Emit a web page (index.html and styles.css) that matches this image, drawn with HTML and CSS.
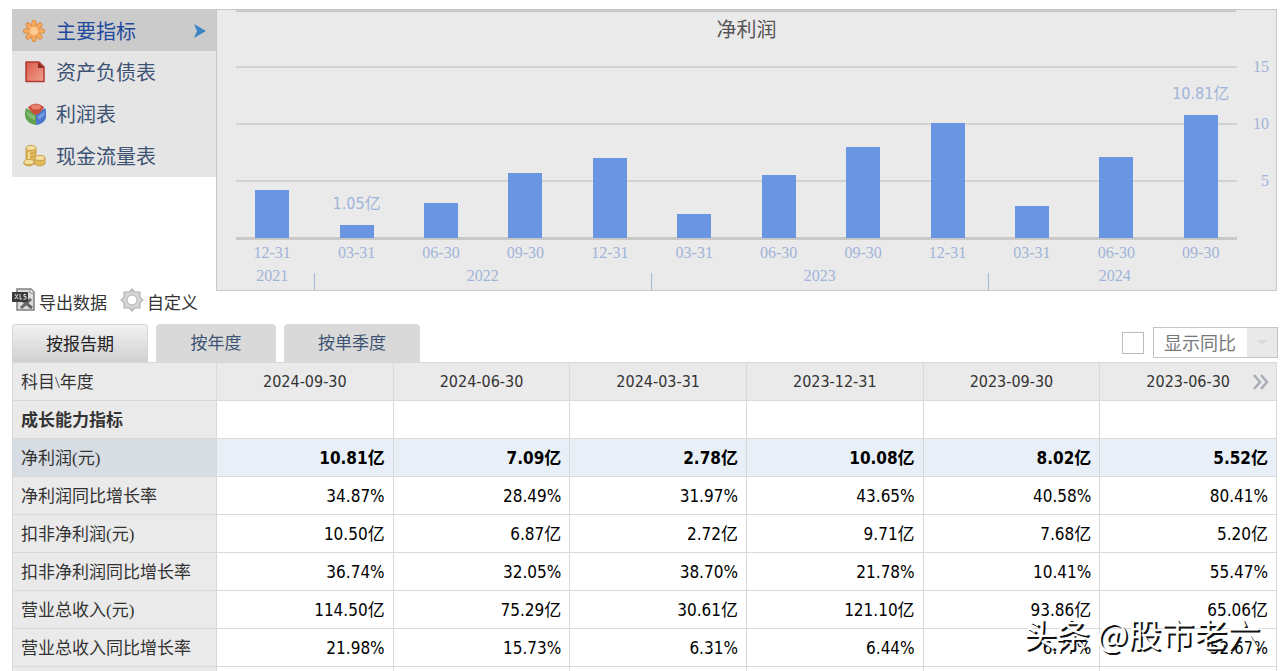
FILE: index.html
```html
<!DOCTYPE html>
<html lang="zh-CN">
<head>
<meta charset="utf-8">
<meta name="viewport" content="width=device-width, initial-scale=1">
<title>主要指标</title>
<link rel="stylesheet" href="styles.css">
</head>
<body>
<main class="page">
  <section class="overview">
    <nav class="menu">
      <a class="menu-item active" href="#main">
        <svg class="icon" viewBox="0 0 24 24"><g stroke="#dc8434" stroke-width="5" stroke-linecap="round"><path d="M12 3.500v17M3.500 12h17M6 6l12 12M18 6l-12 12"/></g><g stroke="#f5ac62" stroke-width="3.400" stroke-linecap="round"><path d="M12 3.500v17M3.500 12h17M6 6l12 12M18 6l-12 12"/></g><circle cx="12" cy="12" r="4" fill="#fbcb92"/></svg>
        <span>主要指标</span>
        <svg class="arrow" viewBox="0 0 12 14"><path d="M0 0L12 7L0 14L3 7Z" fill="#3d84c6"/></svg>
      </a>
      <a class="menu-item" href="#balance">
        <svg class="icon" viewBox="0 0 24 24"><defs><linearGradient id="doc" x2="1" y2="1"><stop offset="0" stop-color="#d95a4c"/><stop offset="1" stop-color="#f2a18e"/></linearGradient></defs><path d="M4 2H17L22 7V21.500H4Z" fill="url(#doc)" stroke="#b03a32" stroke-width="1.500" stroke-linejoin="round"/><path d="M16 2V8H22Z" fill="#8e2a25"/></svg>
        <span>资产负债表</span>
      </a>
      <a class="menu-item" href="#income">
        <svg class="icon" viewBox="0 0 24 24"><path d="M14 12L4 6C1 14 4 22 14 23Z" fill="#62a150"/><path d="M14 12L23 6C27 14 23 22 14 23Z" fill="#4b78cc"/><path d="M6 5Q14-2 22 5Q20 10 14 13Q8 10 6 5Z" fill="#c9503d"/><ellipse cx="14" cy="5" rx="5" ry="2.500" fill="#e9806b"/><path d="M4 9Q9 12 13 14V18Q6 17 4 9Z" fill="#94c584" opacity=".7"/><path d="M16 14Q20 12 23 9Q23 15 16 18Z" fill="#87a9e8" opacity=".7"/></svg>
        <span>利润表</span>
      </a>
      <a class="menu-item" href="#cash">
        <svg class="icon" viewBox="0 0 24 24"><g fill="#dfb858" stroke="#c9a250"><path d="M4 4V20H14V4Z"/><ellipse cx="9" cy="4" rx="5" ry="2.500" fill="#f5dfa0"/><path d="M4 8Q9 11 14 8M4 12Q9 15 14 12M4 16Q9 19 14 16" fill="none"/><path d="M2 18V20Q7 24 12 20V18Z"/><ellipse cx="7" cy="18" rx="5" ry="2.500" fill="#f5dfa0"/><path d="M13 14V20Q18 24 23 20V14Z"/><ellipse cx="18" cy="14" rx="5" ry="2.500" fill="#f5dfa0"/></g><path d="M7 8V15" stroke="#f2d98f" stroke-width="2"/></svg>
        <span>现金流量表</span>
      </a>
    </nav>
    <figure class="chart">
      <figcaption class="chart-title">净利润</figcaption>
      <div class="plot">
        <div class="lines"><i></i><i></i><i></i><i></i></div>
        <div class="ticks"><span>15</span><span>10</span><span>5</span></div>
        <div class="bars">
          <div class="col"><div class="bar" style="height:48px"></div></div>
          <div class="col"><span class="value">1.05亿</span><div class="bar" style="height:13px"></div></div>
          <div class="col"><div class="bar" style="height:35px"></div></div>
          <div class="col"><div class="bar" style="height:65px"></div></div>
          <div class="col"><div class="bar" style="height:80px"></div></div>
          <div class="col"><div class="bar" style="height:24px"></div></div>
          <div class="col"><div class="bar" style="height:63px"></div></div>
          <div class="col"><div class="bar" style="height:91px"></div></div>
          <div class="col"><div class="bar" style="height:115px"></div></div>
          <div class="col"><div class="bar" style="height:32px"></div></div>
          <div class="col"><div class="bar" style="height:81px"></div></div>
          <div class="col"><span class="value">10.81亿</span><div class="bar" style="height:123px"></div></div>
        </div>
      </div>
      <div class="dates"><span>12-31</span><span>03-31</span><span>06-30</span><span>09-30</span><span>12-31</span><span>03-31</span><span>06-30</span><span>09-30</span><span>12-31</span><span>03-31</span><span>06-30</span><span>09-30</span></div>
      <div class="years"><span>2021</span><span>2022</span><span>2023</span><span>2024</span></div>
    </figure>
  </section>

  <div class="tools">
    <button class="tool" type="button">
      <svg class="icon" viewBox="0 0 24 24"><path d="M5 1H19L22 4V22H5Z" fill="#dcdcdc" stroke="#808080" stroke-width="1.500"/><path d="M18 1V5H22" fill="#fff" stroke="#808080"/><path d="M10 12L20 20M19 11L9 20" stroke="#666" stroke-width="3"/><rect x="0" y="4" width="16" height="10" fill="#3c3c3c"/><path d="M3 6L6 11M6 6L3 11M8 6V11H10M14 6.500H12V8.500H14V11H11.500" stroke="#ddd" fill="none"/></svg>
      <span>导出数据</span>
    </button>
    <button class="tool" type="button">
      <svg class="icon" viewBox="0 0 24 24"><path d="M12 1L14.500 4L20 4L20 9.500L23 12L20 14.500V20H14.500L12 23L9.500 20H4V14.500L1 12L4 9.500V4H9.500Z" fill="#d5d5d5" stroke="#b2b2b2" stroke-width="1.200" stroke-linejoin="round"/><circle cx="12" cy="12" r="5" fill="#fff" stroke="#b2b2b2"/></svg>
      <span>自定义</span>
    </button>
  </div>

  <div class="controls">
    <div class="tabs">
      <button class="tab selected" type="button">按报告期</button>
      <button class="tab narrow" type="button">按年度</button>
      <button class="tab" type="button">按单季度</button>
    </div>
    <div class="compare">
      <input class="check" type="checkbox" aria-label="显示同比">
      <div class="select-box">
        <select class="select" aria-label="对比方式"><option>显示同比</option></select>
        <svg class="caret" viewBox="0 0 10 5"><path d="M0 0H10L5 5Z" fill="#dadada"/></svg>
      </div>
    </div>
  </div>

  <table class="data">
    <thead>
      <tr><th>科目\年度</th><th>2024-09-30</th><th>2024-06-30</th><th>2024-03-31</th><th>2023-12-31</th><th>2023-09-30</th><th>2023-06-30<button class="next" type="button" aria-label="下一页"><svg viewBox="0 0 16 16"><path d="M1 1L7 8L1 15M8 1L14 8L8 15" fill="none" stroke="#a9adb5" stroke-width="2.500"/></svg></button></th></tr>
    </thead>
    <tbody>
      <tr class="group"><th>成长能力指标</th><td></td><td></td><td></td><td></td><td></td><td></td></tr>
      <tr class="current"><th>净利润(元)</th><td>10.81亿</td><td>7.09亿</td><td>2.78亿</td><td>10.08亿</td><td>8.02亿</td><td>5.52亿</td></tr>
      <tr><th>净利润同比增长率</th><td>34.87%</td><td>28.49%</td><td>31.97%</td><td>43.65%</td><td>40.58%</td><td>80.41%</td></tr>
      <tr><th>扣非净利润(元)</th><td>10.50亿</td><td>6.87亿</td><td>2.72亿</td><td>9.71亿</td><td>7.68亿</td><td>5.20亿</td></tr>
      <tr><th>扣非净利润同比增长率</th><td>36.74%</td><td>32.05%</td><td>38.70%</td><td>21.78%</td><td>10.41%</td><td>55.47%</td></tr>
      <tr><th>营业总收入(元)</th><td>114.50亿</td><td>75.29亿</td><td>30.61亿</td><td>121.10亿</td><td>93.86亿</td><td>65.06亿</td></tr>
      <tr><th>营业总收入同比增长率</th><td>21.98%</td><td>15.73%</td><td>6.31%</td><td>6.44%</td><td>6.77%</td><td>52.67%</td></tr>
      <tr><th></th><td></td><td></td><td></td><td></td><td></td><td></td></tr>
    </tbody>
  </table>
  <div class="watermark">头条 @股市老六</div>
</main>
</body>
</html>
```
FILE: styles.css
```css
* { box-sizing: border-box; }
html { height: 100%; overflow: hidden; }
body {
  height: 100%;
  margin: 0;
  overflow: hidden;
  background: #fff;
  color: #333;
  font: 17px/24px "Liberation Serif", "Noto Sans CJK SC", serif;
}
button { font: inherit; color: inherit; border: 0; padding: 0; background: none; }
.page { position: relative; height: 100%; overflow: hidden; padding: 9px 3px 0 12px; }
.icon { width: 24px; height: 24px; flex: none; }

.overview { display: grid; grid-template-columns: 204px 1fr; align-items: start; }
.menu { background: #e5e5e5; border-top: 1px solid #ccc; }
.menu-item {
  display: flex;
  align-items: center;
  gap: 10px;
  height: 42px;
  padding: 0 10px;
  color: #3d5374;
  font-size: 20px;
  text-decoration: none;
}
.menu-item span { padding-top: 2px; }
.menu-item.active { height: 41px; background: #cbcbcb; color: #1f4a9c; }
.arrow { width: 12px; height: 14px; margin-left: auto; }

.chart {
  margin: 0;
  background: #eaeaea;
  border: 1px solid #c8c8c8;
  color: #9fb4d9;
  font-size: 16px;
}
.chart-title {
  height: 56px;
  padding-top: 8px;
  background: linear-gradient(#c8c8c8, #c8c8c8) no-repeat 19px 0 / calc(100% - 59px) 2px;
  color: #555;
  font-size: 20px;
  text-align: center;
}
.plot { position: relative; height: 174px; }
.lines {
  position: absolute;
  inset: 0 39px 0 19px;
  display: flex;
  flex-direction: column;
  justify-content: space-between;
}
.lines i { height: 2px; background: #d2d2d2; }
.lines i:last-child { height: 3px; background: #c8c8c8; }
.ticks {
  position: absolute;
  inset: -11px 7px auto auto;
  display: grid;
  grid-auto-rows: 57px;
  text-align: right;
}
.bars {
  position: relative;
  display: grid;
  grid-template-columns: repeat(12, 1fr);
  height: 100%;
  margin: 0 33px 0 13px;
  padding-bottom: 2px;
}
.col { display: flex; flex-direction: column; align-items: center; justify-content: flex-end; }
.bar { width: 34px; background: #6a96e1; }
.value { margin-bottom: 9px; line-height: 24px; font-family: "DejaVu Sans Condensed", "Noto Sans CJK SC", sans-serif; }
.dates, .years { display: grid; margin: 0 33px 0 13px; text-align: center; }
.years { margin-right: 35px; }
.dates { grid-template-columns: repeat(12, 1fr); padding-top: 1px; line-height: 24px; }
.years { grid-template-columns: 1fr 4fr 4fr 3fr; line-height: 22px; }
.years span { height: 25px; background: linear-gradient(#a5b8da, #a5b8da) left bottom / 1px 17px no-repeat; }
.years span:first-child { background: none; }

.tools { display: flex; gap: 13px; height: 33px; }
.tool { display: flex; gap: 3px; height: 24px; white-space: nowrap; }
.tool .icon { margin-top: -3px; }
.tool span { padding-top: 1px; }

.controls { display: flex; justify-content: space-between; align-items: flex-end; }
.tabs { display: flex; gap: 8px; }
.tab {
  width: 136px;
  height: 38px;
  padding-top: 2px;
  border-radius: 4px 4px 0 0;
  background: #d9d9d9;
  color: #3d5374;
}
.tab.narrow { width: 120px; }
.tab.selected {
  border: 1px solid #d5d5d5;
  border-bottom: 0;
  background: linear-gradient(#f2f2f2, #d0d0d0);
  color: #222;
}
.compare { display: flex; align-items: center; gap: 9px; padding-bottom: 4px; margin-right: -1px; }
.check { appearance: none; width: 22px; height: 22px; margin: 0; border: 1px solid #bbb; background: #fff; }
.select-box { position: relative; }
.select {
  display: block;
  appearance: none;
  width: 125px;
  height: 31px;
  padding: 2px 10px 0;
  border: 1px solid #c4c4c4;
  border-radius: 0;
  background: linear-gradient(#e9e9e9, #e9e9e9) right / 30px 100% no-repeat #fff;
  color: #777;
  font: 18px/28px "Liberation Serif", "Noto Sans CJK SC", serif;
}
.caret { position: absolute; right: 11px; top: 13px; width: 10px; height: 5px; pointer-events: none; }

.data { width: 100%; table-layout: fixed; border-collapse: collapse; }
.data th, .data td { height: 38px; padding: 0 8px; border: 1px solid #d9d9d9; }
.data th { padding-top: 3px; background: #eaeaea; font-weight: 400; text-align: left; white-space: nowrap; }
.data th:first-child { width: 204px; }
.data thead th { position: relative; }
.data thead th + th { padding-top: 0; text-align: center; font-family: "DejaVu Sans Condensed", sans-serif; font-size: 16px; }
.data td { color: #000; text-align: right; font-family: "DejaVu Sans Condensed", "Noto Sans CJK SC", sans-serif; }
.data .group th { font-weight: 700; }
.data .current th { background: #d7dde3; }
.data .current td { background: #e8eff6; font-weight: 700; }
.next { position: absolute; right: 7px; top: 11px; width: 16px; height: 16px; }
.next svg { display: block; }

.watermark {
  position: absolute;
  right: 20px;
  bottom: 14px;
  color: #fff;
  font: 33px/48px "Noto Sans CJK SC", sans-serif;
  text-shadow: 2px 2px 0 #111;
}
```
